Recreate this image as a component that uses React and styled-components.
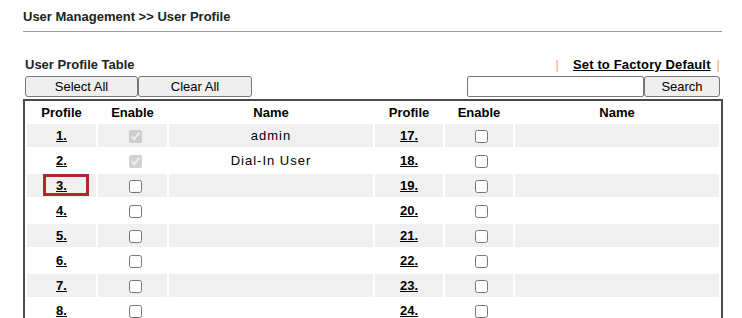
import styled, { createGlobalStyle } from "styled-components";

const GlobalStyle = createGlobalStyle`
    body {
        margin: 0;
        background: #fff;
        font-family: "Liberation Sans", Arial, sans-serif;
        font-size: 13px;
        color: #000;
    }
`;

const Page = styled.div`
    padding: 9px 0 0 23px;
    width: 700px;
`;
const Title = styled.h1`
    margin: 0;
    font-size: 13px;
    line-height: 15px;
    font-weight: bold;
    color: #222;
`;
const Rule = styled.div`
    margin-top: 7px;
    width: 699px;
    border-bottom: 1px solid #999;
`;
const TableHead = styled.div`
    margin-top: 25px;
    display: flex;
    justify-content: space-between;
    align-items: center;
    height: 15px;
    line-height: 15px;
    padding: 0 3px 0 2px;
`;
const Caption = styled.span`
    font-weight: bold;
    color: #222;
`;
const Actions = styled.div`
    display: flex;
    align-items: center;
`;
const Bar = styled.span`
    color: #f4a582;
    margin: ${p => p.$side === "left" ? "0 14px 0 0" : "0 0 0 6px"};
`;
const FactoryLink = styled.a`
    font-weight: bold;
    color: #000;
    text-decoration: underline;
    letter-spacing: 0.15px;
    cursor: pointer;
`;
const Toolbar = styled.div`
    margin-top: 4px;
    display: flex;
    align-items: center;
    padding: 0 3px 0 2px;
`;
const Button = styled.button`
    width: ${p => p.$w}px;
    height: 21px;
    padding: 0;
    background: #efefef;
    border: 1px solid #767676;
    border-radius: 3px;
    font-family: "Liberation Sans", Arial, sans-serif;
    font-size: 13px;
    color: #000;
`;
const SearchInput = styled.input`
    margin-left: auto;
    width: 177px;
    height: 21px;
    box-sizing: border-box;
    border: 1px solid #767676;
    border-radius: 2px;
    padding: 1px 2px;
`;
const Table = styled.table`
    margin-top: 2px;
    width: 700px;
    table-layout: fixed;
    border: 2px solid #4a4a4a;
    border-collapse: separate;
    border-spacing: 2px;
`;
const Th = styled.th`
    width: ${p => p.$w}px;
    height: 19px;
    padding: 0;
    font-size: 13px;
    font-weight: bold;
    text-align: center;
    color: #000;
`;
const Row = styled.tr`
    background: ${p => p.$odd ? "#f0f0f0" : "#fff"};
`;
const Td = styled.td`
    position: relative;
    height: 23px;
    padding: 0;
    text-align: center;
    vertical-align: middle;
`;
const ProfileLink = styled.a`
    font-weight: bold;
    color: #000;
    text-decoration: underline;
    cursor: pointer;
`;
const Check = styled.input`
    margin: 0 0 0 5px;
    width: 13px;
    height: 13px;
    vertical-align: middle;
`;
const NameText = styled.span`
    letter-spacing: 1px;
`;
const Highlight = styled.span`
    position: absolute;
    left: 16px;
    top: 0;
    width: 46px;
    height: 22px;
    box-sizing: border-box;
    border: 3px solid #b52530;
    pointer-events: none;
`;

const names = { 1: "admin", 2: "Dial-In User" };

const Cells = ({ n }) => (
    <>
        <Td>
            <ProfileLink>{n}.</ProfileLink>
            {n === 3 && <Highlight />}
        </Td>
        <Td>
            {names[n]
                ? <Check type="checkbox" checked disabled readOnly />
                : <Check type="checkbox" />}
        </Td>
        <Td><NameText>{names[n] || ""}</NameText></Td>
    </>
);

export default () => {
    const rows = Array.from({ length: 8 }, (_, i) => i + 1);
    return (
        <Page>
            <GlobalStyle />
            <Title>User Management &gt;&gt; User Profile</Title>
            <Rule />
            <TableHead>
                <Caption>User Profile Table</Caption>
                <Actions>
                    <Bar $side="left">|</Bar>
                    <FactoryLink>Set to Factory Default</FactoryLink>
                    <Bar $side="right">|</Bar>
                </Actions>
            </TableHead>
            <Toolbar>
                <Button $w={113}>Select All</Button>
                <Button $w={114}>Clear All</Button>
                <SearchInput type="text" />
                <Button $w={76}>Search</Button>
            </Toolbar>
            <Table>
                <thead>
                    <tr>
                        <Th $w={69}>Profile</Th>
                        <Th $w={69}>Enable</Th>
                        <Th $w={204}>Name</Th>
                        <Th $w={68}>Profile</Th>
                        <Th $w={68}>Enable</Th>
                        <Th $w={204}>Name</Th>
                    </tr>
                </thead>
                <tbody>
                    {rows.map(n => <Row key={n} $odd={n % 2 === 1}>
                        <Cells n={n} />
                        <Cells n={n + 16} />
                    </Row>)}
                </tbody>
            </Table>
        </Page>
    );
}
